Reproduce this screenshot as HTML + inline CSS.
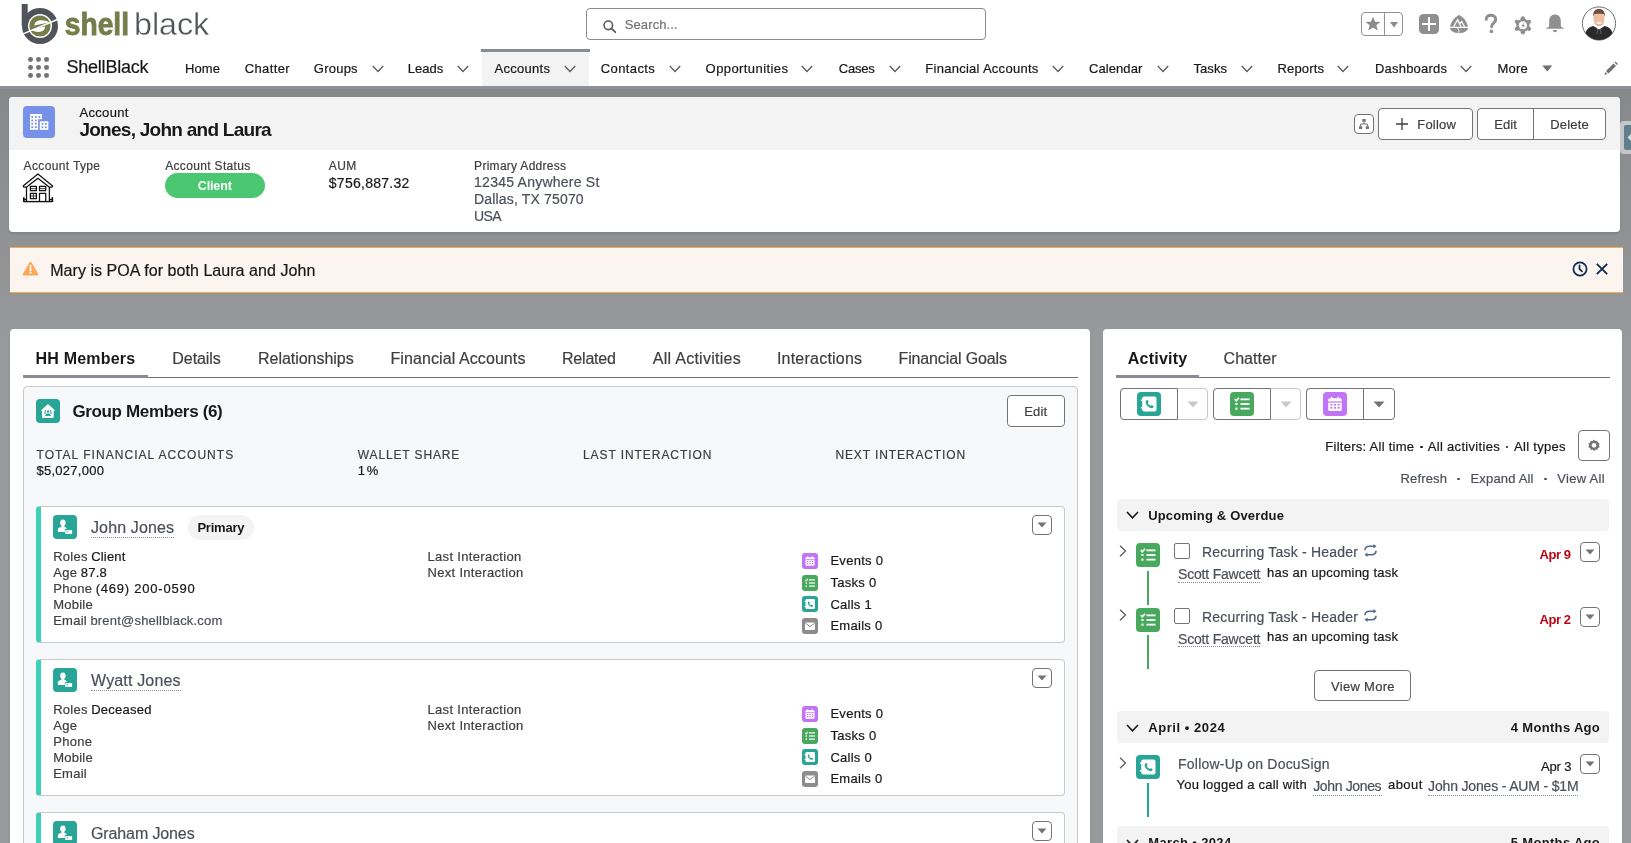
<!DOCTYPE html><html><head><meta charset="utf-8"><style>
*{margin:0;padding:0;box-sizing:border-box}
html,body{width:1631px;height:843px;overflow:hidden;background:#98999b;font-family:"Liberation Sans",sans-serif;position:relative}
.t{position:absolute;white-space:nowrap;-webkit-text-stroke:0.2px currentColor}
body{will-change:transform}
.r{position:absolute}
svg{position:absolute;overflow:visible}
.u{border-bottom:1px dotted #747474}
</style></head><body>
<div class="r" style="left:0px;top:0px;width:1631px;height:86px;background:#fff"></div>
<div class="r" style="left:0px;top:86px;width:1631px;height:3px;background:#8d9094"></div>
<div class="r" style="left:0px;top:89px;width:1631px;height:260px;background:linear-gradient(#87888a,#98999b)"></div>
<svg style="left:0;top:0" width="220" height="50" viewBox="0 0 220 50">
<circle cx="40" cy="26" r="18" fill="#50545a"/>
<rect x="21.7" y="4" width="6" height="22" fill="#50545a"/>
<circle cx="40" cy="26" r="12" fill="#fff"/>
<circle cx="40" cy="26" r="10.6" fill="#757d4b"/>
<path d="M34.3 25.6 C34.5 21.5 38 20.1 41.5 20.2 C45 20.3 47.5 21.2 49 22.4 C44 23.3 39 24.4 34.3 25.6 Z" fill="#fff"/><path d="M31.8 29.6 C36.5 28.4 41 27.4 45.2 26.6 C45 30 42.5 31.9 38.5 31.9 C35 31.9 32.8 31 31.8 29.6 Z" fill="#fff"/>
<line x1="22" y1="34.4" x2="58" y2="19.2" stroke="#fff" stroke-width="1.5"/>
<text x="64.8" y="35.2" font-family="Liberation Sans" font-weight="bold" font-size="32" fill="#757d4b" stroke="#757d4b" stroke-width="0.9" textLength="64.2" lengthAdjust="spacingAndGlyphs">shell</text>
<text x="134" y="35.2" font-family="Liberation Sans" font-size="32" fill="#50545a" stroke="#fff" stroke-width="0.35" textLength="75.2" lengthAdjust="spacingAndGlyphs">black</text>
</svg>
<div class="r" style="left:586px;top:8px;width:400px;height:32px;border:1px solid #8c8c8c;border-radius:4px;background:#fff"></div>
<svg style="left:603px;top:20px" width="14" height="13" viewBox="0 0 14 13"><circle cx="5.3" cy="5.3" r="4.3" fill="none" stroke="#5c5c5c" stroke-width="1.6"/><line x1="8.4" y1="8.4" x2="12.3" y2="12.2" stroke="#5c5c5c" stroke-width="1.8" stroke-linecap="round"/></svg>
<div class="t " style="left:624.70px;top:18.40px;font-size:13px;line-height:13px;color:#747474;letter-spacing:0.121px;">Search...</div>
<div class="r" style="left:1361px;top:12px;width:42px;height:24px;border:1px solid #939393;border-radius:4px;background:#fff"></div>
<div class="r" style="left:1384px;top:12px;width:1px;height:24px;background:#939393"></div>
<svg style="left:1365px;top:16px" width="16" height="16" viewBox="0 0 16 16"><path d="M8 0.8 L10.1 5.8 L15.4 6 L11.3 9.3 L12.8 14.6 L8 11.5 L3.2 14.6 L4.7 9.3 L0.6 6 L5.9 5.8 Z" fill="#8c8c8c"/></svg>
<svg style="left:1389px;top:21px" width="10" height="8" viewBox="0 0 10 8"><path d="M1 1 L9 1 L5 6.5 Z" fill="#8c8c8c"/></svg>
<div class="r" style="left:1419px;top:14px;width:20px;height:20px;background:#8f8f8f;border-radius:4.5px"></div>
<div class="r" style="left:1428px;top:17px;width:2.2px;height:14px;background:#fff"></div>
<div class="r" style="left:1422px;top:23px;width:14px;height:2.2px;background:#fff"></div>
<svg style="left:1446px;top:12px" width="26" height="24" viewBox="0 0 26 24"><path d="M13.1 3 C16.5 4.5 21.2 9 21.8 14.7 L4.2 14.7 C4.8 9 9.7 4.5 13.1 3Z" fill="#8f8f8f"/><path d="M4 16.1 L22 16.1 C21.6 19.3 17.5 21.3 13 21.3 C8.5 21.3 4.4 19.3 4 16.1Z" fill="#8f8f8f"/><path d="M11.6 15.9 L13 18.6 L12.7 21.6" fill="none" stroke="#fff" stroke-width="0.9"/><path d="M7.6 14.8 L11.6 7.7 L15 14.8 M13.6 11.7 L15.6 9.5 L18.6 14.8" fill="none" stroke="#fff" stroke-width="1.3" stroke-linejoin="miter"/></svg>
<svg style="left:1484px;top:14px" width="14" height="20" viewBox="0 0 14 20"><path d="M2.2 5.3 C2.2 2.8 4.2 1.3 6.8 1.3 C9.6 1.3 11.7 3 11.7 5.4 C11.7 8.5 7.8 9.2 7.6 12.7" fill="none" stroke="#8f8f8f" stroke-width="3" stroke-linecap="round"/><circle cx="7.4" cy="17.4" r="1.8" fill="#8f8f8f"/></svg>
<svg style="left:1514px;top:15.5px" width="18" height="19" viewBox="0 0 18 19"><g fill="#8f8f8f"><circle cx="8.9" cy="9.35" r="6.6"/><circle cx="8.90" cy="2.35" r="2.15"/><circle cx="14.96" cy="5.85" r="2.15"/><circle cx="14.96" cy="12.85" r="2.15"/><circle cx="8.90" cy="16.35" r="2.15"/><circle cx="2.84" cy="12.85" r="2.15"/><circle cx="2.84" cy="5.85" r="2.15"/></g><circle cx="8.9" cy="9.35" r="4.0" fill="#fff"/><path d="M10.3 6.6 L7.3 9.9 L9 9.9 L8 12.4 L10.9 9 L9.3 9 L10.6 6.6 Z" fill="#8f8f8f"/></svg>
<svg style="left:1545px;top:13.8px" width="20" height="19" viewBox="0 0 20 19"><path d="M10 0.5 C14 0.5 15.8 3.5 15.8 7 L15.8 11.5 C15.8 13 17.5 13.5 18.8 14.2 L18.8 14.8 L1.2 14.8 L1.2 14.2 C2.5 13.5 4.2 13 4.2 11.5 L4.2 7 C4.2 3.5 6 0.5 10 0.5 Z" fill="#8f8f8f"/><path d="M7.8 16 L12.2 16 C12 17.6 11 18.2 10 18.2 C9 18.2 8 17.6 7.8 16 Z" fill="#8f8f8f"/></svg>
<svg style="left:1581px;top:5.5px" width="36" height="35" viewBox="0 0 36 35"><defs><clipPath id="av"><circle cx="18" cy="17.5" r="16.5"/></clipPath></defs><circle cx="18" cy="17.5" r="16.6" fill="#fff" stroke="#6f6f6f" stroke-width="1"/><g clip-path="url(#av)"><ellipse cx="18" cy="12.8" rx="5.6" ry="7.2" fill="#efbfa3"/><path d="M12.2 11 C11.8 5.5 14 3 18 3 C22 3 24.2 5.5 23.8 11 L22.8 8.2 C20 7.6 16 7.6 13.2 8.2 Z" fill="#6e4e3a"/><path d="M14.2 16 C15 19.5 21 19.5 21.8 16 L21.5 18.5 C20 20.3 16 20.3 14.5 18.5Z" fill="#d9a58b"/><rect x="15.6" y="16.2" width="4.8" height="1.6" rx="0.8" fill="#fff"/><path d="M3 36 C3 25 7 21 12.5 20 L15.5 22 L18 23.5 L20.5 22 L23.5 20 C29 21 33 25 33 36Z" fill="#2b292a"/><path d="M16.5 23 L16 28 M19.5 23 L20 28" stroke="#bbb" stroke-width="0.4"/></g></svg>
<div class="r" style="left:28.3px;top:57.3px;width:4.8px;height:4.8px;border-radius:50%;background:#737373"></div>
<div class="r" style="left:36.3px;top:57.3px;width:4.8px;height:4.8px;border-radius:50%;background:#737373"></div>
<div class="r" style="left:44.3px;top:57.3px;width:4.8px;height:4.8px;border-radius:50%;background:#737373"></div>
<div class="r" style="left:28.3px;top:65.3px;width:4.8px;height:4.8px;border-radius:50%;background:#737373"></div>
<div class="r" style="left:36.3px;top:65.3px;width:4.8px;height:4.8px;border-radius:50%;background:#737373"></div>
<div class="r" style="left:44.3px;top:65.3px;width:4.8px;height:4.8px;border-radius:50%;background:#737373"></div>
<div class="r" style="left:28.3px;top:73.3px;width:4.8px;height:4.8px;border-radius:50%;background:#737373"></div>
<div class="r" style="left:36.3px;top:73.3px;width:4.8px;height:4.8px;border-radius:50%;background:#737373"></div>
<div class="r" style="left:44.3px;top:73.3px;width:4.8px;height:4.8px;border-radius:50%;background:#737373"></div>
<div class="t " style="left:66.50px;top:57.96px;font-size:18px;line-height:18px;color:#181818;letter-spacing:-0.227px;">ShellBlack</div>
<div class="r" style="left:482px;top:52px;width:107px;height:34px;background:#f3f3f3"></div>
<div class="r" style="left:481px;top:49px;width:109px;height:3px;background:#878c92"></div>
<div class="t " style="left:185.00px;top:62.10px;font-size:13px;line-height:13px;color:#181818;letter-spacing:0.104px;">Home</div>
<div class="t " style="left:244.70px;top:62.10px;font-size:13px;line-height:13px;color:#181818;letter-spacing:0.393px;">Chatter</div>
<div class="t " style="left:313.80px;top:62.10px;font-size:13px;line-height:13px;color:#181818;letter-spacing:0.232px;">Groups</div>
<svg style="left:371.6px;top:65px" width="12" height="8" viewBox="0 0 12 8"><path d="M0.8 1 L6 6.5 L11.2 1" fill="none" stroke="#5c5c5c" stroke-width="1.3"/></svg>
<div class="t " style="left:407.70px;top:62.10px;font-size:13px;line-height:13px;color:#181818;letter-spacing:0.041px;">Leads</div>
<svg style="left:457px;top:65px" width="12" height="8" viewBox="0 0 12 8"><path d="M0.8 1 L6 6.5 L11.2 1" fill="none" stroke="#5c5c5c" stroke-width="1.3"/></svg>
<div class="t " style="left:494.50px;top:62.10px;font-size:13px;line-height:13px;color:#181818;letter-spacing:0.288px;">Accounts</div>
<svg style="left:564px;top:65px" width="12" height="8" viewBox="0 0 12 8"><path d="M0.8 1 L6 6.5 L11.2 1" fill="none" stroke="#5c5c5c" stroke-width="1.3"/></svg>
<div class="t " style="left:600.80px;top:62.10px;font-size:13px;line-height:13px;color:#181818;letter-spacing:0.384px;">Contacts</div>
<svg style="left:668.5px;top:65px" width="12" height="8" viewBox="0 0 12 8"><path d="M0.8 1 L6 6.5 L11.2 1" fill="none" stroke="#5c5c5c" stroke-width="1.3"/></svg>
<div class="t " style="left:705.60px;top:62.10px;font-size:13px;line-height:13px;color:#181818;letter-spacing:0.421px;">Opportunities</div>
<svg style="left:801px;top:65px" width="12" height="8" viewBox="0 0 12 8"><path d="M0.8 1 L6 6.5 L11.2 1" fill="none" stroke="#5c5c5c" stroke-width="1.3"/></svg>
<div class="t " style="left:838.80px;top:62.10px;font-size:13px;line-height:13px;color:#181818;letter-spacing:-0.215px;">Cases</div>
<svg style="left:888.5px;top:65px" width="12" height="8" viewBox="0 0 12 8"><path d="M0.8 1 L6 6.5 L11.2 1" fill="none" stroke="#5c5c5c" stroke-width="1.3"/></svg>
<div class="t " style="left:925.30px;top:62.10px;font-size:13px;line-height:13px;color:#181818;letter-spacing:0.269px;">Financial Accounts</div>
<svg style="left:1052px;top:65px" width="12" height="8" viewBox="0 0 12 8"><path d="M0.8 1 L6 6.5 L11.2 1" fill="none" stroke="#5c5c5c" stroke-width="1.3"/></svg>
<div class="t " style="left:1089.00px;top:62.10px;font-size:13px;line-height:13px;color:#181818;letter-spacing:0.074px;">Calendar</div>
<svg style="left:1157px;top:65px" width="12" height="8" viewBox="0 0 12 8"><path d="M0.8 1 L6 6.5 L11.2 1" fill="none" stroke="#5c5c5c" stroke-width="1.3"/></svg>
<div class="t " style="left:1193.50px;top:62.10px;font-size:13px;line-height:13px;color:#181818;letter-spacing:0.066px;">Tasks</div>
<svg style="left:1240.7px;top:65px" width="12" height="8" viewBox="0 0 12 8"><path d="M0.8 1 L6 6.5 L11.2 1" fill="none" stroke="#5c5c5c" stroke-width="1.3"/></svg>
<div class="t " style="left:1277.50px;top:62.10px;font-size:13px;line-height:13px;color:#181818;letter-spacing:0.161px;">Reports</div>
<svg style="left:1337px;top:65px" width="12" height="8" viewBox="0 0 12 8"><path d="M0.8 1 L6 6.5 L11.2 1" fill="none" stroke="#5c5c5c" stroke-width="1.3"/></svg>
<div class="t " style="left:1375.00px;top:62.10px;font-size:13px;line-height:13px;color:#181818;letter-spacing:0.208px;">Dashboards</div>
<svg style="left:1460px;top:65px" width="12" height="8" viewBox="0 0 12 8"><path d="M0.8 1 L6 6.5 L11.2 1" fill="none" stroke="#5c5c5c" stroke-width="1.3"/></svg>
<div class="t " style="left:1497.40px;top:62.10px;font-size:13px;line-height:13px;color:#181818;letter-spacing:0.225px;">More</div>
<svg style="left:1541.8px;top:64.5px" width="12" height="8" viewBox="0 0 12 8"><path d="M0.3 0.5 L10.3 0.5 L5.3 6.5 Z" fill="#6f6f6f"/></svg>
<svg style="left:1603px;top:61px" width="16" height="15" viewBox="0 0 16 15"><path d="M3 10 L10.5 2.5 L13 5 L5.5 12.5 Z" fill="#707070"/><path d="M2.5 11 L4.5 13 L1.5 14 Z" fill="#707070"/><path d="M11.5 1.5 L12.5 0.5 L15 3 L14 4 Z" fill="#707070"/></svg>
<div class="r" style="left:9px;top:97px;width:1610.5px;height:135px;background:#fff;border-radius:4px;box-shadow:0 2px 2px rgba(0,0,0,.1)"></div>
<div class="r" style="left:9px;top:97px;width:1610.5px;height:53px;background:#f3f3f3;border-radius:4px 4px 0 0"></div>
<div class="r" style="left:23px;top:106px;width:32px;height:32px;background:#7891e8;border-radius:4px"></div>
<svg style="left:23px;top:106px" width="32" height="32" viewBox="0 0 32 32"><path d="M7 8 H18.9 V13.2 H15.1 V23.85 H7 Z" fill="#fff"/><rect x="16.8" y="15.3" width="8.55" height="8.55" fill="#fff"/><g fill="#7891e8"><rect x="8.299999999999999" y="10.1" width="1.8" height="1.8"/><rect x="8.299999999999999" y="13.6" width="1.8" height="1.8"/><rect x="8.299999999999999" y="16.8" width="1.8" height="1.8"/><rect x="8.299999999999999" y="20.200000000000003" width="1.8" height="1.8"/><rect x="11.9" y="10.1" width="1.8" height="1.8"/><rect x="11.9" y="13.6" width="1.8" height="1.8"/><rect x="11.9" y="16.8" width="1.8" height="1.8"/><rect x="11.9" y="20.200000000000003" width="1.8" height="1.8"/><rect x="15.5" y="10.1" width="1.8" height="1.8"/><rect x="18.6" y="17.0" width="1.8" height="1.8"/><rect x="18.6" y="20.400000000000002" width="1.8" height="1.8"/><rect x="21.900000000000002" y="17.0" width="1.8" height="1.8"/><rect x="21.900000000000002" y="20.400000000000002" width="1.8" height="1.8"/></g></svg>
<div class="t " style="left:79.40px;top:106.20px;font-size:13px;line-height:13px;color:#181818;letter-spacing:0.336px;">Account</div>
<div class="t " style="left:79.40px;top:119.92px;font-size:19px;line-height:19px;color:#181818;font-weight:bold;-webkit-text-stroke:0;letter-spacing:-0.732px;">Jones, John and Laura</div>
<div class="r" style="left:1354px;top:114px;width:20px;height:20px;border:1px solid #747474;border-radius:4px;background:#fff"></div>
<svg style="left:1358px;top:118px" width="12" height="12" viewBox="0 0 12 12"><g fill="#747474"><rect x="4.3" y="1" width="3.4" height="2.8"/><rect x="1" y="8.2" width="3.2" height="2.8"/><rect x="7.8" y="8.2" width="3.2" height="2.8"/></g><path d="M6 3.8 V6 M2.6 8.2 V6 H9.4 V8.2" fill="none" stroke="#747474" stroke-width="1"/></svg>
<div class="r" style="left:1378px;top:108px;width:94.5px;height:31.5px;border:1px solid #747474;border-radius:4px;background:#fff"></div>
<svg style="left:1396px;top:117.5px" width="12" height="12" viewBox="0 0 12 12"><path d="M6 0 V12 M0 6 H12" stroke="#3e3e3e" stroke-width="1.3"/></svg>
<div class="t " style="left:1417.30px;top:117.60px;font-size:13px;line-height:13px;color:#3e3e3e;letter-spacing:0.184px;">Follow</div>
<div class="r" style="left:1477px;top:108px;width:129px;height:31.5px;border:1px solid #747474;border-radius:4px;background:#fff"></div>
<div class="r" style="left:1533px;top:108px;width:1px;height:31.5px;background:#747474"></div>
<div class="t " style="left:1494.20px;top:117.60px;font-size:13px;line-height:13px;color:#3e3e3e;letter-spacing:0.065px;">Edit</div>
<div class="t " style="left:1550.30px;top:117.60px;font-size:13px;line-height:13px;color:#3e3e3e;letter-spacing:0.181px;">Delete</div>
<div class="r" style="left:1620px;top:121px;width:14px;height:33px;background:#c5c6c8;border-radius:4px 0 0 4px"></div>
<div class="r" style="left:1624px;top:125px;width:10px;height:25px;background:#5f7f8b;border-radius:2px 0 0 2px"></div>
<svg style="left:1627px;top:133px" width="5" height="9" viewBox="0 0 5 9"><path d="M4.5 0.5 L0.5 4.5 L4.5 8.5 Z" fill="#d8dde0"/></svg>
<div class="t " style="left:23.60px;top:159.74px;font-size:12px;line-height:12px;color:#3e3e3e;letter-spacing:0.357px;">Account Type</div>
<div class="t " style="left:165.20px;top:159.74px;font-size:12px;line-height:12px;color:#3e3e3e;letter-spacing:0.333px;">Account Status</div>
<div class="t " style="left:328.80px;top:159.54px;font-size:12px;line-height:12px;color:#3e3e3e;letter-spacing:0.414px;">AUM</div>
<div class="t " style="left:474.10px;top:159.54px;font-size:12px;line-height:12px;color:#3e3e3e;letter-spacing:0.283px;">Primary Address</div>
<svg style="left:20px;top:171px" width="36" height="34" viewBox="0 0 36 34"><g fill="none" stroke="#111" stroke-width="1.25" stroke-linejoin="round">
<path d="M6.3 16.2 H4.2 C3.2 16.2 2.9 15.2 3.7 14.5 L17.9 3 L32.1 14.5 C32.9 15.2 32.6 16.2 31.6 16.2 H29.5"/>
<path d="M6.3 16.2 L17.9 7.3 L29.5 16.2"/>
<path d="M6.5 16 V30.4 M29.4 16 V30.4"/>
<rect x="10.4" y="15.4" width="6" height="4.3"/><rect x="19.5" y="15.4" width="6.2" height="4.3"/>
<path d="M10.4 17.6 H16.4 M19.5 17.6 H25.7" stroke-width="0.8"/>
<rect x="10.4" y="22.4" width="6" height="5.2"/><path d="M13.4 22.4 V27.6 M10.4 25 H16.4" stroke-width="0.8"/>
<path d="M19.5 30.4 V22.4 H25.7 V30.4"/>
<path d="M3.8 30.6 H32.4" stroke-width="1.4"/>
</g><path d="M3.8 26.3 V31 M32.4 26.3 V31" stroke="#111" stroke-width="1.6"/><path d="M4 28.5 H6.5 M29.4 28.5 H32" stroke="#111" stroke-width="1.6"/></svg>
<div class="r" style="left:165px;top:173px;width:100px;height:25px;background:#4bc771;border-radius:13px"></div>
<div class="t " style="left:197.80px;top:180.12px;font-size:12.5px;line-height:12.5px;color:#fff;font-weight:bold;-webkit-text-stroke:0;letter-spacing:-0.144px;">Client</div>
<div class="t " style="left:328.80px;top:175.85px;font-size:14px;line-height:14px;color:#181818;letter-spacing:0.259px;">$756,887.32</div>
<div class="t " style="left:474.10px;top:174.95px;font-size:14px;line-height:14px;color:#4b5058;letter-spacing:0.238px;">12345 Anywhere St</div>
<div class="t " style="left:474.10px;top:191.85px;font-size:14px;line-height:14px;color:#4b5058;letter-spacing:0.159px;">Dallas, TX 75070</div>
<div class="t " style="left:474.10px;top:208.55px;font-size:14px;line-height:14px;color:#4b5058;letter-spacing:-0.598px;">USA</div>
<div class="r" style="left:10px;top:247px;width:1613px;height:46px;background:#fcf4ee;border-top:1px solid #f7a94f;border-bottom:1px solid #f7a94f"></div>
<svg style="left:21.5px;top:261px" width="17" height="15" viewBox="0 0 17 15"><path d="M8.5 0.8 C9 0.8 9.3 1 9.6 1.5 L16.2 13 C16.6 13.8 16.2 14.4 15.4 14.4 L1.6 14.4 C0.8 14.4 0.4 13.8 0.8 13 L7.4 1.5 C7.7 1 8 0.8 8.5 0.8Z" fill="#f9a95a"/><path d="M8.5 4.6 V9.6" stroke="#fff" stroke-width="1.7" stroke-linecap="round"/><circle cx="8.5" cy="11.8" r="1" fill="#fff"/></svg>
<div class="t " style="left:50.20px;top:262.66px;font-size:16px;line-height:16px;color:#181818;letter-spacing:0.054px;">Mary is POA for both Laura and John</div>
<svg style="left:1572px;top:261px" width="16" height="16" viewBox="0 0 16 16"><circle cx="8" cy="8" r="6.6" fill="none" stroke="#0b2a55" stroke-width="1.7"/><path d="M7.5 4.3 V8.2 L10 10.4" fill="none" stroke="#0b2a55" stroke-width="1.7" stroke-linecap="round"/></svg>
<svg style="left:1596px;top:263px" width="12" height="12" viewBox="0 0 12 12"><path d="M0.8 0.8 L11.2 11.2 M11.2 0.8 L0.8 11.2" stroke="#0b2a55" stroke-width="1.8"/></svg>
<div class="r" style="left:10px;top:329px;width:1080px;height:600px;background:#fff;border-radius:4px;box-shadow:0 2px 2px rgba(0,0,0,.1)"></div>
<div class="r" style="left:1103px;top:329px;width:519px;height:600px;background:#fff;border-radius:4px"></div>
<div class="t " style="left:35.50px;top:350.66px;font-size:16px;line-height:16px;color:#181818;font-weight:bold;-webkit-text-stroke:0;letter-spacing:0.203px;">HH Members</div>
<div class="t " style="left:172.30px;top:350.66px;font-size:16px;line-height:16px;color:#3e3e3e;letter-spacing:-0.059px;">Details</div>
<div class="t " style="left:258.00px;top:350.66px;font-size:16px;line-height:16px;color:#3e3e3e;letter-spacing:-0.028px;">Relationships</div>
<div class="t " style="left:390.50px;top:350.66px;font-size:16px;line-height:16px;color:#3e3e3e;letter-spacing:0.087px;">Financial Accounts</div>
<div class="t " style="left:562.00px;top:350.66px;font-size:16px;line-height:16px;color:#3e3e3e;letter-spacing:-0.201px;">Related</div>
<div class="t " style="left:652.80px;top:350.66px;font-size:16px;line-height:16px;color:#3e3e3e;letter-spacing:0.266px;">All Activities</div>
<div class="t " style="left:776.90px;top:350.66px;font-size:16px;line-height:16px;color:#3e3e3e;letter-spacing:0.229px;">Interactions</div>
<div class="t " style="left:898.50px;top:350.66px;font-size:16px;line-height:16px;color:#3e3e3e;letter-spacing:-0.134px;">Financial Goals</div>
<div class="r" style="left:23px;top:377px;width:1055px;height:1px;background:#707070"></div>
<div class="r" style="left:23px;top:375px;width:125px;height:3px;background:#898d92"></div>
<div class="r" style="left:23px;top:386px;width:1055px;height:600px;background:#f7f8fa;border:1px solid #c9c9c9;border-radius:4px"></div>
<div class="r" style="left:36px;top:399px;width:24px;height:24px;background:#28a597;border-radius:4px"></div>
<svg style="left:36px;top:399px" width="24" height="24" viewBox="0 0 24 24"><path d="M12 5 L19.3 11.7 L17.7 11.7 L17.7 18.3 Q17.7 19.1 16.9 19.1 L6.8 19.1 Q6 19.1 6 18.3 L6 11.7 L4.7 11.7 Z" fill="#fff"/><g fill="#28a597"><ellipse cx="12" cy="12.6" rx="1.1" ry="1.4"/><path d="M9.2 17.1 C9.5 15 10.5 14.6 12 14.6 C13.5 14.6 14.5 15 14.8 17.1 Z"/><path d="M9.6 11.1 C8.6 11.1 8.6 13.5 8.3 15.2 C8.8 14.7 9.5 14.5 10 14.5 L9.5 13.3 C10 12.5 10.3 11.1 9.6 11.1Z"/><path d="M14.4 11.1 C15.4 11.1 15.4 13.5 15.7 15.2 C15.2 14.7 14.5 14.5 14 14.5 L14.5 13.3 C14 12.5 13.7 11.1 14.4 11.1Z"/></g></svg>
<div class="t " style="left:72.40px;top:402.91px;font-size:17px;line-height:17px;color:#181818;font-weight:bold;-webkit-text-stroke:0;letter-spacing:-0.346px;">Group Members (6)</div>
<div class="r" style="left:1007px;top:395px;width:58px;height:32px;border:1px solid #747474;border-radius:4px;background:#fff"></div>
<div class="t " style="left:1024.20px;top:405.00px;font-size:13px;line-height:13px;color:#3e3e3e;letter-spacing:0.198px;">Edit</div>
<div class="t " style="left:36.50px;top:449.04px;font-size:12px;line-height:12px;color:#3e3e3e;letter-spacing:1.044px;">TOTAL FINANCIAL ACCOUNTS</div>
<div class="t " style="left:357.80px;top:449.04px;font-size:12px;line-height:12px;color:#3e3e3e;letter-spacing:0.862px;">WALLET SHARE</div>
<div class="t " style="left:582.90px;top:449.04px;font-size:12px;line-height:12px;color:#3e3e3e;letter-spacing:0.938px;">LAST INTERACTION</div>
<div class="t " style="left:835.40px;top:449.04px;font-size:12px;line-height:12px;color:#3e3e3e;letter-spacing:0.891px;">NEXT INTERACTION</div>
<div class="t " style="left:36.50px;top:463.80px;font-size:13px;line-height:13px;color:#181818;letter-spacing:0.256px;">$5,027,000</div>
<div class="t " style="left:357.80px;top:463.80px;font-size:13px;line-height:13px;color:#181818;letter-spacing:-0.953px;">1 %</div>
<div class="r" style="left:36px;top:506px;width:1029px;height:137px;background:#fff;border:1px solid #c9c9c9;border-left:5px solid #3ccfb9;border-radius:4px"></div>
<div class="r" style="left:53px;top:515px;width:24px;height:24px;background:#28a597;border-radius:4px"></div>
<svg style="left:53px;top:515px" width="24" height="24" viewBox="0 0 24 24"><ellipse cx="9.9" cy="7.7" rx="2.7" ry="3.2" fill="#fff"/><path d="M8.6 10.5 L11.2 10.5 L11.4 11.8 C12.6 12.2 13.4 12.8 13.8 14 L11.8 14 L11.8 16.9 L4.8 16.9 L4.8 14.8 C4.8 13.2 6.5 12.3 8.4 11.8 Z" fill="#fff"/><rect x="12.2" y="15.1" width="6.9" height="3.8" fill="#fff"/><path d="M13.3 16.2 L15.3 16.2 L14.3 17.6 Z" fill="#28a597"/></svg>
<div class="t " style="left:91.00px;top:519.96px;font-size:16px;line-height:16px;color:#4b5058;letter-spacing:0.123px;">John Jones</div>
<div class="r" style="left:91px;top:537px;width:83px;height:1px;border-bottom:1px dotted #8c8c8c"></div>
<div class="r" style="left:188.2px;top:514.8px;width:65.8px;height:25.3px;background:#f3f3f3;border-radius:13px"></div>
<div class="t " style="left:197.40px;top:520.90px;font-size:13px;line-height:13px;color:#181818;font-weight:bold;-webkit-text-stroke:0;letter-spacing:-0.223px;">Primary</div>
<div class="t " style="left:53.20px;top:550.00px;font-size:13px;line-height:13px;color:#3e3e3e;letter-spacing:0.249px;">Roles</div>
<div class="t " style="left:91.17px;top:550.00px;font-size:13px;line-height:13px;color:#181818;letter-spacing:0.200px;">Client</div>
<div class="t " style="left:53.20px;top:566.00px;font-size:13px;line-height:13px;color:#3e3e3e;letter-spacing:0.347px;">Age</div>
<div class="t " style="left:80.75px;top:566.00px;font-size:13px;line-height:13px;color:#181818;letter-spacing:0.253px;">87.8</div>
<div class="t " style="left:53.20px;top:582.00px;font-size:13px;line-height:13px;color:#3e3e3e;letter-spacing:0.282px;">Phone</div>
<div class="t " style="left:95.66px;top:582.00px;font-size:13px;line-height:13px;color:#181818;letter-spacing:0.774px;">(469) 200-0590</div>
<div class="t " style="left:53.20px;top:598.00px;font-size:13px;line-height:13px;color:#3e3e3e;letter-spacing:0.230px;">Mobile</div>
<div class="t " style="left:53.20px;top:614.00px;font-size:13px;line-height:13px;color:#3e3e3e;letter-spacing:0.244px;">Email</div>
<div class="t " style="left:90.41px;top:614.00px;font-size:13px;line-height:13px;color:#4b5058;letter-spacing:0.202px;">brent@shellblack.com</div>
<div class="t " style="left:427.50px;top:550.00px;font-size:13px;line-height:13px;color:#3e3e3e;letter-spacing:0.320px;">Last Interaction</div>
<div class="t " style="left:427.50px;top:566.00px;font-size:13px;line-height:13px;color:#3e3e3e;letter-spacing:0.309px;">Next Interaction</div>
<div class="r" style="left:1032px;top:515px;width:20px;height:20px;border:1px solid #747474;border-radius:4px;background:#fff"></div>
<svg style="left:1037px;top:522px" width="10" height="6" viewBox="0 0 10 6"><path d="M0.5 0.5 L9.5 0.5 L5 5.5Z" fill="#747474"/></svg>
<div class="r" style="left:802px;top:553.0px;width:16px;height:16px;background:#c274f6;border-radius:3px"></div>
<svg style="left:802px;top:553.0px" width="16" height="16" viewBox="0 0 16 16"><rect x="3.5" y="4.2" width="9" height="8.5" rx="1" fill="#fff"/><rect x="3.5" y="6.3" width="9" height="0.8" fill="#c274f6"/><g fill="#c274f6"><rect x="5" y="8" width="1.3" height="1.1"/><rect x="7.4" y="8" width="1.3" height="1.1"/><rect x="9.8" y="8" width="1.3" height="1.1"/><rect x="5" y="10" width="1.3" height="1.1"/><rect x="7.4" y="10" width="1.3" height="1.1"/><rect x="9.8" y="10" width="1.3" height="1.1"/></g><rect x="5.3" y="3.2" width="1" height="2" fill="#fff"/><rect x="9.7" y="3.2" width="1" height="2" fill="#fff"/></svg>
<div class="t " style="left:830.40px;top:554.30px;font-size:13px;line-height:13px;color:#181818;letter-spacing:0.289px;">Events 0</div>
<div class="r" style="left:802px;top:574.7px;width:16px;height:16px;background:#48a95e;border-radius:3px"></div>
<svg style="left:802px;top:574.7px" width="16" height="16" viewBox="0 0 16 16"><path d="M3.2 4.8 L4.2 5.8 L6 3.8" fill="none" stroke="#fff" stroke-width="1.1"/><rect x="7" y="4.3" width="6" height="1.2" fill="#fff"/><rect x="7" y="7.4" width="6" height="1.2" fill="#fff"/><rect x="7" y="10.5" width="6" height="1.2" fill="#fff"/><rect x="3.6" y="7.3" width="1.4" height="1.4" fill="#fff"/><rect x="3.6" y="10.4" width="1.4" height="1.4" fill="#fff"/></svg>
<div class="t " style="left:830.40px;top:576.00px;font-size:13px;line-height:13px;color:#181818;letter-spacing:0.294px;">Tasks 0</div>
<div class="r" style="left:802px;top:596.4px;width:16px;height:16px;background:#28a597;border-radius:3px"></div>
<svg style="left:802px;top:596.4px" width="16" height="16" viewBox="0 0 16 16"><rect x="3.5" y="3" width="9.5" height="10" rx="1.3" fill="#fff"/><rect x="2.6" y="5" width="1.8" height="1" fill="#fff"/><rect x="2.6" y="10" width="1.8" height="1" fill="#fff"/><path d="M6.3 5.6 C6.8 5.2 7.3 5.4 7.5 6 L7.6 6.7 C7.7 7 7.4 7.2 7.2 7.4 C7.6 8.3 8.2 8.9 9 9.3 C9.2 9 9.5 8.8 9.8 8.9 L10.6 9.1 C11.1 9.3 11.2 9.8 10.9 10.2 C10.3 11 9.3 11 8.3 10.4 C7 9.6 6.1 8.4 5.8 7.2 C5.7 6.5 5.9 5.9 6.3 5.6Z" fill="#28a597"/></svg>
<div class="t " style="left:830.40px;top:597.70px;font-size:13px;line-height:13px;color:#181818;letter-spacing:0.265px;">Calls 1</div>
<div class="r" style="left:802px;top:618.1px;width:16px;height:16px;background:#8c8c8c;border-radius:3px"></div>
<svg style="left:802px;top:618.1px" width="16" height="16" viewBox="0 0 16 16"><rect x="3" y="4.5" width="10" height="7.5" rx="0.8" fill="#fff"/><path d="M3.3 5 L8 8.6 L12.7 5" fill="none" stroke="#8c8c8c" stroke-width="1"/></svg>
<div class="t " style="left:830.40px;top:619.40px;font-size:13px;line-height:13px;color:#181818;letter-spacing:0.285px;">Emails 0</div>
<div class="r" style="left:36px;top:659px;width:1029px;height:137px;background:#fff;border:1px solid #c9c9c9;border-left:5px solid #3ccfb9;border-radius:4px"></div>
<div class="r" style="left:53px;top:668px;width:24px;height:24px;background:#28a597;border-radius:4px"></div>
<svg style="left:53px;top:668px" width="24" height="24" viewBox="0 0 24 24"><ellipse cx="9.9" cy="7.7" rx="2.7" ry="3.2" fill="#fff"/><path d="M8.6 10.5 L11.2 10.5 L11.4 11.8 C12.6 12.2 13.4 12.8 13.8 14 L11.8 14 L11.8 16.9 L4.8 16.9 L4.8 14.8 C4.8 13.2 6.5 12.3 8.4 11.8 Z" fill="#fff"/><rect x="12.2" y="15.1" width="6.9" height="3.8" fill="#fff"/><path d="M13.3 16.2 L15.3 16.2 L14.3 17.6 Z" fill="#28a597"/></svg>
<div class="t " style="left:91.00px;top:672.96px;font-size:16px;line-height:16px;color:#4b5058;letter-spacing:0.165px;">Wyatt Jones</div>
<div class="r" style="left:91px;top:690px;width:89.6px;height:1px;border-bottom:1px dotted #8c8c8c"></div>
<div class="t " style="left:53.20px;top:703.00px;font-size:13px;line-height:13px;color:#3e3e3e;letter-spacing:0.249px;">Roles</div>
<div class="t " style="left:91.17px;top:703.00px;font-size:13px;line-height:13px;color:#181818;letter-spacing:0.251px;">Deceased</div>
<div class="t " style="left:53.20px;top:719.00px;font-size:13px;line-height:13px;color:#3e3e3e;letter-spacing:0.347px;">Age</div>
<div class="t " style="left:53.20px;top:735.00px;font-size:13px;line-height:13px;color:#3e3e3e;letter-spacing:0.282px;">Phone</div>
<div class="t " style="left:53.20px;top:751.00px;font-size:13px;line-height:13px;color:#3e3e3e;letter-spacing:0.230px;">Mobile</div>
<div class="t " style="left:53.20px;top:767.00px;font-size:13px;line-height:13px;color:#3e3e3e;letter-spacing:0.244px;">Email</div>
<div class="t " style="left:427.50px;top:703.00px;font-size:13px;line-height:13px;color:#3e3e3e;letter-spacing:0.320px;">Last Interaction</div>
<div class="t " style="left:427.50px;top:719.00px;font-size:13px;line-height:13px;color:#3e3e3e;letter-spacing:0.309px;">Next Interaction</div>
<div class="r" style="left:1032px;top:668px;width:20px;height:20px;border:1px solid #747474;border-radius:4px;background:#fff"></div>
<svg style="left:1037px;top:675px" width="10" height="6" viewBox="0 0 10 6"><path d="M0.5 0.5 L9.5 0.5 L5 5.5Z" fill="#747474"/></svg>
<div class="r" style="left:802px;top:706.0px;width:16px;height:16px;background:#c274f6;border-radius:3px"></div>
<svg style="left:802px;top:706.0px" width="16" height="16" viewBox="0 0 16 16"><rect x="3.5" y="4.2" width="9" height="8.5" rx="1" fill="#fff"/><rect x="3.5" y="6.3" width="9" height="0.8" fill="#c274f6"/><g fill="#c274f6"><rect x="5" y="8" width="1.3" height="1.1"/><rect x="7.4" y="8" width="1.3" height="1.1"/><rect x="9.8" y="8" width="1.3" height="1.1"/><rect x="5" y="10" width="1.3" height="1.1"/><rect x="7.4" y="10" width="1.3" height="1.1"/><rect x="9.8" y="10" width="1.3" height="1.1"/></g><rect x="5.3" y="3.2" width="1" height="2" fill="#fff"/><rect x="9.7" y="3.2" width="1" height="2" fill="#fff"/></svg>
<div class="t " style="left:830.40px;top:707.30px;font-size:13px;line-height:13px;color:#181818;letter-spacing:0.289px;">Events 0</div>
<div class="r" style="left:802px;top:727.7px;width:16px;height:16px;background:#48a95e;border-radius:3px"></div>
<svg style="left:802px;top:727.7px" width="16" height="16" viewBox="0 0 16 16"><path d="M3.2 4.8 L4.2 5.8 L6 3.8" fill="none" stroke="#fff" stroke-width="1.1"/><rect x="7" y="4.3" width="6" height="1.2" fill="#fff"/><rect x="7" y="7.4" width="6" height="1.2" fill="#fff"/><rect x="7" y="10.5" width="6" height="1.2" fill="#fff"/><rect x="3.6" y="7.3" width="1.4" height="1.4" fill="#fff"/><rect x="3.6" y="10.4" width="1.4" height="1.4" fill="#fff"/></svg>
<div class="t " style="left:830.40px;top:729.00px;font-size:13px;line-height:13px;color:#181818;letter-spacing:0.294px;">Tasks 0</div>
<div class="r" style="left:802px;top:749.4px;width:16px;height:16px;background:#28a597;border-radius:3px"></div>
<svg style="left:802px;top:749.4px" width="16" height="16" viewBox="0 0 16 16"><rect x="3.5" y="3" width="9.5" height="10" rx="1.3" fill="#fff"/><rect x="2.6" y="5" width="1.8" height="1" fill="#fff"/><rect x="2.6" y="10" width="1.8" height="1" fill="#fff"/><path d="M6.3 5.6 C6.8 5.2 7.3 5.4 7.5 6 L7.6 6.7 C7.7 7 7.4 7.2 7.2 7.4 C7.6 8.3 8.2 8.9 9 9.3 C9.2 9 9.5 8.8 9.8 8.9 L10.6 9.1 C11.1 9.3 11.2 9.8 10.9 10.2 C10.3 11 9.3 11 8.3 10.4 C7 9.6 6.1 8.4 5.8 7.2 C5.7 6.5 5.9 5.9 6.3 5.6Z" fill="#28a597"/></svg>
<div class="t " style="left:830.40px;top:750.70px;font-size:13px;line-height:13px;color:#181818;letter-spacing:0.265px;">Calls 0</div>
<div class="r" style="left:802px;top:771.1px;width:16px;height:16px;background:#8c8c8c;border-radius:3px"></div>
<svg style="left:802px;top:771.1px" width="16" height="16" viewBox="0 0 16 16"><rect x="3" y="4.5" width="10" height="7.5" rx="0.8" fill="#fff"/><path d="M3.3 5 L8 8.6 L12.7 5" fill="none" stroke="#8c8c8c" stroke-width="1"/></svg>
<div class="t " style="left:830.40px;top:772.40px;font-size:13px;line-height:13px;color:#181818;letter-spacing:0.285px;">Emails 0</div>
<div class="r" style="left:36px;top:812px;width:1029px;height:137px;background:#fff;border:1px solid #c9c9c9;border-left:5px solid #3ccfb9;border-radius:4px"></div>
<div class="r" style="left:53px;top:821px;width:24px;height:24px;background:#28a597;border-radius:4px"></div>
<svg style="left:53px;top:821px" width="24" height="24" viewBox="0 0 24 24"><ellipse cx="9.9" cy="7.7" rx="2.7" ry="3.2" fill="#fff"/><path d="M8.6 10.5 L11.2 10.5 L11.4 11.8 C12.6 12.2 13.4 12.8 13.8 14 L11.8 14 L11.8 16.9 L4.8 16.9 L4.8 14.8 C4.8 13.2 6.5 12.3 8.4 11.8 Z" fill="#fff"/><rect x="12.2" y="15.1" width="6.9" height="3.8" fill="#fff"/><path d="M13.3 16.2 L15.3 16.2 L14.3 17.6 Z" fill="#28a597"/></svg>
<div class="t " style="left:91.00px;top:825.96px;font-size:16px;line-height:16px;color:#4b5058;letter-spacing:-0.118px;">Graham Jones</div>
<div class="r" style="left:91px;top:843px;width:103.7px;height:1px;border-bottom:1px dotted #8c8c8c"></div>
<div class="t " style="left:53.20px;top:856.00px;font-size:13px;line-height:13px;color:#3e3e3e;letter-spacing:0.249px;">Roles</div>
<div class="t " style="left:53.20px;top:872.00px;font-size:13px;line-height:13px;color:#3e3e3e;letter-spacing:0.347px;">Age</div>
<div class="t " style="left:53.20px;top:888.00px;font-size:13px;line-height:13px;color:#3e3e3e;letter-spacing:0.282px;">Phone</div>
<div class="t " style="left:53.20px;top:904.00px;font-size:13px;line-height:13px;color:#3e3e3e;letter-spacing:0.230px;">Mobile</div>
<div class="t " style="left:53.20px;top:920.00px;font-size:13px;line-height:13px;color:#3e3e3e;letter-spacing:0.244px;">Email</div>
<div class="t " style="left:427.50px;top:856.00px;font-size:13px;line-height:13px;color:#3e3e3e;letter-spacing:0.320px;">Last Interaction</div>
<div class="t " style="left:427.50px;top:872.00px;font-size:13px;line-height:13px;color:#3e3e3e;letter-spacing:0.309px;">Next Interaction</div>
<div class="r" style="left:1032px;top:821px;width:20px;height:20px;border:1px solid #747474;border-radius:4px;background:#fff"></div>
<svg style="left:1037px;top:828px" width="10" height="6" viewBox="0 0 10 6"><path d="M0.5 0.5 L9.5 0.5 L5 5.5Z" fill="#747474"/></svg>
<div class="r" style="left:802px;top:859.0px;width:16px;height:16px;background:#c274f6;border-radius:3px"></div>
<svg style="left:802px;top:859.0px" width="16" height="16" viewBox="0 0 16 16"><rect x="3.5" y="4.2" width="9" height="8.5" rx="1" fill="#fff"/><rect x="3.5" y="6.3" width="9" height="0.8" fill="#c274f6"/><g fill="#c274f6"><rect x="5" y="8" width="1.3" height="1.1"/><rect x="7.4" y="8" width="1.3" height="1.1"/><rect x="9.8" y="8" width="1.3" height="1.1"/><rect x="5" y="10" width="1.3" height="1.1"/><rect x="7.4" y="10" width="1.3" height="1.1"/><rect x="9.8" y="10" width="1.3" height="1.1"/></g><rect x="5.3" y="3.2" width="1" height="2" fill="#fff"/><rect x="9.7" y="3.2" width="1" height="2" fill="#fff"/></svg>
<div class="t " style="left:830.40px;top:860.30px;font-size:13px;line-height:13px;color:#181818;letter-spacing:0.289px;">Events 0</div>
<div class="r" style="left:802px;top:880.7px;width:16px;height:16px;background:#48a95e;border-radius:3px"></div>
<svg style="left:802px;top:880.7px" width="16" height="16" viewBox="0 0 16 16"><path d="M3.2 4.8 L4.2 5.8 L6 3.8" fill="none" stroke="#fff" stroke-width="1.1"/><rect x="7" y="4.3" width="6" height="1.2" fill="#fff"/><rect x="7" y="7.4" width="6" height="1.2" fill="#fff"/><rect x="7" y="10.5" width="6" height="1.2" fill="#fff"/><rect x="3.6" y="7.3" width="1.4" height="1.4" fill="#fff"/><rect x="3.6" y="10.4" width="1.4" height="1.4" fill="#fff"/></svg>
<div class="t " style="left:830.40px;top:882.00px;font-size:13px;line-height:13px;color:#181818;letter-spacing:0.294px;">Tasks 0</div>
<div class="r" style="left:802px;top:902.4px;width:16px;height:16px;background:#28a597;border-radius:3px"></div>
<svg style="left:802px;top:902.4px" width="16" height="16" viewBox="0 0 16 16"><rect x="3.5" y="3" width="9.5" height="10" rx="1.3" fill="#fff"/><rect x="2.6" y="5" width="1.8" height="1" fill="#fff"/><rect x="2.6" y="10" width="1.8" height="1" fill="#fff"/><path d="M6.3 5.6 C6.8 5.2 7.3 5.4 7.5 6 L7.6 6.7 C7.7 7 7.4 7.2 7.2 7.4 C7.6 8.3 8.2 8.9 9 9.3 C9.2 9 9.5 8.8 9.8 8.9 L10.6 9.1 C11.1 9.3 11.2 9.8 10.9 10.2 C10.3 11 9.3 11 8.3 10.4 C7 9.6 6.1 8.4 5.8 7.2 C5.7 6.5 5.9 5.9 6.3 5.6Z" fill="#28a597"/></svg>
<div class="t " style="left:830.40px;top:903.70px;font-size:13px;line-height:13px;color:#181818;letter-spacing:0.265px;">Calls 0</div>
<div class="r" style="left:802px;top:924.1px;width:16px;height:16px;background:#8c8c8c;border-radius:3px"></div>
<svg style="left:802px;top:924.1px" width="16" height="16" viewBox="0 0 16 16"><rect x="3" y="4.5" width="10" height="7.5" rx="0.8" fill="#fff"/><path d="M3.3 5 L8 8.6 L12.7 5" fill="none" stroke="#8c8c8c" stroke-width="1"/></svg>
<div class="t " style="left:830.40px;top:925.40px;font-size:13px;line-height:13px;color:#181818;letter-spacing:0.285px;">Emails 0</div>
<div class="t " style="left:1127.80px;top:350.66px;font-size:16px;line-height:16px;color:#181818;font-weight:bold;-webkit-text-stroke:0;letter-spacing:0.237px;">Activity</div>
<div class="t " style="left:1223.50px;top:350.66px;font-size:16px;line-height:16px;color:#3e3e3e;letter-spacing:0.081px;">Chatter</div>
<div class="r" style="left:1116px;top:377px;width:493.5px;height:1px;background:#707070"></div>
<div class="r" style="left:1116px;top:375px;width:83px;height:3px;background:#898d92"></div>
<div class="r" style="left:1120.2px;top:388px;width:88.2px;height:32px;border:1px solid #c9c9c9;border-radius:4px;background:#fff"></div>
<div class="r" style="left:1120.2px;top:388px;width:57.5px;height:32px;border:1px solid #747474;border-radius:4px 0 0 4px;background:#fff"></div>
<div class="r" style="left:1136.8px;top:392px;width:24px;height:24px;background:#28a597;border-radius:4px"></div>
<svg style="left:1136.8px;top:392px" width="24" height="24" viewBox="0 0 16 16"><rect x="3.5" y="3" width="9.5" height="10" rx="1.3" fill="#fff"/><rect x="2.6" y="5" width="1.8" height="1" fill="#fff"/><rect x="2.6" y="10" width="1.8" height="1" fill="#fff"/><path d="M6.3 5.6 C6.8 5.2 7.3 5.4 7.5 6 L7.6 6.7 C7.7 7 7.4 7.2 7.2 7.4 C7.6 8.3 8.2 8.9 9 9.3 C9.2 9 9.5 8.8 9.8 8.9 L10.6 9.1 C11.1 9.3 11.2 9.8 10.9 10.2 C10.3 11 9.3 11 8.3 10.4 C7 9.6 6.1 8.4 5.8 7.2 C5.7 6.5 5.9 5.9 6.3 5.6Z" fill="#28a597"/></svg>
<svg style="left:1187.2px;top:401px" width="12" height="7" viewBox="0 0 12 7"><path d="M0.5 0.5 L11.5 0.5 L6 6.5Z" fill="#c9c9c9"/></svg>
<div class="r" style="left:1213.3px;top:388px;width:88.2px;height:32px;border:1px solid #c9c9c9;border-radius:4px;background:#fff"></div>
<div class="r" style="left:1213.3px;top:388px;width:57.5px;height:32px;border:1px solid #747474;border-radius:4px 0 0 4px;background:#fff"></div>
<div class="r" style="left:1229.8999999999999px;top:392px;width:24px;height:24px;background:#48a95e;border-radius:4px"></div>
<svg style="left:1229.8999999999999px;top:392px" width="24" height="24" viewBox="0 0 16 16"><path d="M3.2 4.8 L4.2 5.8 L6 3.8" fill="none" stroke="#fff" stroke-width="1.1"/><rect x="7" y="4.3" width="6" height="1.2" fill="#fff"/><rect x="7" y="7.4" width="6" height="1.2" fill="#fff"/><rect x="7" y="10.5" width="6" height="1.2" fill="#fff"/><rect x="3.6" y="7.3" width="1.4" height="1.4" fill="#fff"/><rect x="3.6" y="10.4" width="1.4" height="1.4" fill="#fff"/></svg>
<svg style="left:1280.3px;top:401px" width="12" height="7" viewBox="0 0 12 7"><path d="M0.5 0.5 L11.5 0.5 L6 6.5Z" fill="#c9c9c9"/></svg>
<div class="r" style="left:1306.4px;top:388px;width:88.2px;height:32px;border:1px solid #747474;border-radius:4px;background:#fff"></div>
<div class="r" style="left:1306.4px;top:388px;width:57.5px;height:32px;border:1px solid #747474;border-radius:4px 0 0 4px;background:#fff"></div>
<div class="r" style="left:1323.0px;top:392px;width:24px;height:24px;background:#c274f6;border-radius:4px"></div>
<svg style="left:1323.0px;top:392px" width="24" height="24" viewBox="0 0 16 16"><rect x="3.5" y="4.2" width="9" height="8.5" rx="1" fill="#fff"/><rect x="3.5" y="6.3" width="9" height="0.8" fill="#c274f6"/><g fill="#c274f6"><rect x="5" y="8" width="1.3" height="1.1"/><rect x="7.4" y="8" width="1.3" height="1.1"/><rect x="9.8" y="8" width="1.3" height="1.1"/><rect x="5" y="10" width="1.3" height="1.1"/><rect x="7.4" y="10" width="1.3" height="1.1"/><rect x="9.8" y="10" width="1.3" height="1.1"/></g><rect x="5.3" y="3.2" width="1" height="2" fill="#fff"/><rect x="9.7" y="3.2" width="1" height="2" fill="#fff"/></svg>
<svg style="left:1373.4px;top:401px" width="12" height="7" viewBox="0 0 12 7"><path d="M0.5 0.5 L11.5 0.5 L6 6.5Z" fill="#747474"/></svg>
<div class="t " style="left:1325.30px;top:440.40px;font-size:13px;line-height:13px;color:#181818;letter-spacing:0.268px;">Filters: All time</div>
<div class="t " style="left:1427.80px;top:440.40px;font-size:13px;line-height:13px;color:#181818;letter-spacing:0.306px;">All activities</div>
<div class="t " style="left:1514.00px;top:440.40px;font-size:13px;line-height:13px;color:#181818;letter-spacing:0.295px;">All types</div>
<div class="r" style="left:1420px;top:445.8px;width:2.6px;height:2.6px;background:#181818;border-radius:50%"></div>
<div class="r" style="left:1505.6px;top:445.8px;width:2.6px;height:2.6px;background:#181818;border-radius:50%"></div>
<div class="r" style="left:1578px;top:430.2px;width:31.5px;height:31px;border:1px solid #747474;border-radius:4px;background:#fff"></div>
<svg style="left:1586px;top:438px" width="16" height="16" viewBox="0 0 16 16"><path d="M8 1.5 L9.3 3 L11.3 2.7 L11.8 4.6 L13.7 5.4 L12.9 7.3 L13.7 9.2 L11.8 10 L11.3 11.9 L9.3 11.6 L8 13.2 L6.7 11.6 L4.7 11.9 L4.2 10 L2.3 9.2 L3.1 7.3 L2.3 5.4 L4.2 4.6 L4.7 2.7 L6.7 3 Z" fill="#747474"/><circle cx="8" cy="7.35" r="2.3" fill="#fff"/></svg>
<div class="t " style="left:1400.50px;top:472.30px;font-size:13px;line-height:13px;color:#4b5058;letter-spacing:0.161px;">Refresh</div>
<div class="r" style="left:1457.4px;top:477.7px;width:2.6px;height:2.6px;background:#4b5058;border-radius:50%"></div>
<div class="t " style="left:1470.50px;top:472.30px;font-size:13px;line-height:13px;color:#4b5058;letter-spacing:0.172px;">Expand All</div>
<div class="r" style="left:1544px;top:477.7px;width:2.6px;height:2.6px;background:#4b5058;border-radius:50%"></div>
<div class="t " style="left:1557.30px;top:472.30px;font-size:13px;line-height:13px;color:#4b5058;letter-spacing:0.286px;">View All</div>
<div class="r" style="left:1117px;top:498.6px;width:491.8px;height:32.2px;background:#f3f3f3;border-radius:4px"></div>
<svg style="left:1126.3px;top:511.20000000000005px" width="13" height="9" viewBox="0 0 13 9"><path d="M1 1 L6.5 6.8 L12 1" fill="none" stroke="#181818" stroke-width="1.6"/></svg>
<div class="t " style="left:1148.20px;top:508.70px;font-size:13px;line-height:13px;color:#181818;font-weight:bold;-webkit-text-stroke:0;letter-spacing:0.164px;">Upcoming &amp; Overdue</div>
<svg style="left:1118.5px;top:544.7px" width="8" height="12" viewBox="0 0 8 12"><path d="M1 0.8 L6.5 6 L1 11.2" fill="none" stroke="#5c5c5c" stroke-width="1.3"/></svg>
<div class="r" style="left:1136px;top:543.2px;width:24px;height:24px;background:#48a95e;border-radius:4px"></div>
<svg style="left:1136px;top:543.2px" width="24" height="24" viewBox="0 0 16 16"><path d="M3.2 4.8 L4.2 5.8 L6 3.8" fill="none" stroke="#fff" stroke-width="1.1"/><rect x="7" y="4.3" width="6" height="1.2" fill="#fff"/><rect x="7" y="7.4" width="6" height="1.2" fill="#fff"/><rect x="7" y="10.5" width="6" height="1.2" fill="#fff"/><rect x="3.6" y="7.3" width="1.4" height="1.4" fill="#fff"/><rect x="3.6" y="10.4" width="1.4" height="1.4" fill="#fff"/></svg>
<div class="r" style="left:1147px;top:570.7px;width:2px;height:34px;background:#48a95e"></div>
<div class="r" style="left:1174.2px;top:543.2px;width:16px;height:16px;border:1px solid #747474;border-radius:2px;background:#fff"></div>
<div class="t " style="left:1201.90px;top:545.35px;font-size:14px;line-height:14px;color:#4b5058;letter-spacing:0.209px;">Recurring Task - Header</div>
<svg style="left:1362.5px;top:544.2px" width="15" height="13" viewBox="0 0 15 13"><g fill="none" stroke="#4f6a92" stroke-width="1.6"><path d="M2 6.2 C2 3.5 4 2.3 6.5 2.3 L11.5 2.3"/><path d="M13 6.8 C13 9.5 11 10.7 8.5 10.7 L3.5 10.7"/></g><path d="M10.5 0 L13.5 2.3 L10.5 4.6Z M4.5 8.4 L1.5 10.7 L4.5 13Z" fill="#4f6a92"/></svg>
<div class="t " style="left:1539.50px;top:547.80px;font-size:13px;line-height:13px;color:#ba0517;font-weight:bold;-webkit-text-stroke:0;letter-spacing:-0.434px;">Apr 9</div>
<div class="r" style="left:1580px;top:541.9000000000001px;width:20px;height:20px;border:1px solid #747474;border-radius:4px;background:#fff"></div>
<svg style="left:1585px;top:548.9000000000001px" width="10" height="6" viewBox="0 0 10 6"><path d="M0.5 0.5 L9.5 0.5 L5 5.5Z" fill="#747474"/></svg>
<div class="t " style="left:1178.10px;top:567.45px;font-size:14px;line-height:14px;color:#4b5058;letter-spacing:-0.200px;">Scott Fawcett</div>
<div class="r" style="left:1178.1px;top:581.7px;width:82.4px;height:1px;border-bottom:1px dotted #8c8c8c"></div>
<div class="t " style="left:1267.00px;top:565.70px;font-size:13px;line-height:13px;color:#181818;letter-spacing:0.237px;">has an upcoming task</div>
<svg style="left:1118.5px;top:609.4px" width="8" height="12" viewBox="0 0 8 12"><path d="M1 0.8 L6.5 6 L1 11.2" fill="none" stroke="#5c5c5c" stroke-width="1.3"/></svg>
<div class="r" style="left:1136px;top:607.9px;width:24px;height:24px;background:#48a95e;border-radius:4px"></div>
<svg style="left:1136px;top:607.9px" width="24" height="24" viewBox="0 0 16 16"><path d="M3.2 4.8 L4.2 5.8 L6 3.8" fill="none" stroke="#fff" stroke-width="1.1"/><rect x="7" y="4.3" width="6" height="1.2" fill="#fff"/><rect x="7" y="7.4" width="6" height="1.2" fill="#fff"/><rect x="7" y="10.5" width="6" height="1.2" fill="#fff"/><rect x="3.6" y="7.3" width="1.4" height="1.4" fill="#fff"/><rect x="3.6" y="10.4" width="1.4" height="1.4" fill="#fff"/></svg>
<div class="r" style="left:1147px;top:635.4px;width:2px;height:34px;background:#48a95e"></div>
<div class="r" style="left:1174.2px;top:607.9px;width:16px;height:16px;border:1px solid #747474;border-radius:2px;background:#fff"></div>
<div class="t " style="left:1201.90px;top:610.05px;font-size:14px;line-height:14px;color:#4b5058;letter-spacing:0.209px;">Recurring Task - Header</div>
<svg style="left:1362.5px;top:608.9px" width="15" height="13" viewBox="0 0 15 13"><g fill="none" stroke="#4f6a92" stroke-width="1.6"><path d="M2 6.2 C2 3.5 4 2.3 6.5 2.3 L11.5 2.3"/><path d="M13 6.8 C13 9.5 11 10.7 8.5 10.7 L3.5 10.7"/></g><path d="M10.5 0 L13.5 2.3 L10.5 4.6Z M4.5 8.4 L1.5 10.7 L4.5 13Z" fill="#4f6a92"/></svg>
<div class="t " style="left:1539.50px;top:612.50px;font-size:13px;line-height:13px;color:#ba0517;font-weight:bold;-webkit-text-stroke:0;letter-spacing:-0.434px;">Apr 2</div>
<div class="r" style="left:1580px;top:606.6px;width:20px;height:20px;border:1px solid #747474;border-radius:4px;background:#fff"></div>
<svg style="left:1585px;top:613.6px" width="10" height="6" viewBox="0 0 10 6"><path d="M0.5 0.5 L9.5 0.5 L5 5.5Z" fill="#747474"/></svg>
<div class="t " style="left:1178.10px;top:632.15px;font-size:14px;line-height:14px;color:#4b5058;letter-spacing:-0.200px;">Scott Fawcett</div>
<div class="r" style="left:1178.1px;top:646.4px;width:82.4px;height:1px;border-bottom:1px dotted #8c8c8c"></div>
<div class="t " style="left:1267.00px;top:630.40px;font-size:13px;line-height:13px;color:#181818;letter-spacing:0.237px;">has an upcoming task</div>
<div class="r" style="left:1314.2px;top:670.4px;width:97.3px;height:31px;border:1px solid #747474;border-radius:4px;background:#fff"></div>
<div class="t " style="left:1331.10px;top:680.00px;font-size:13px;line-height:13px;color:#3e3e3e;letter-spacing:0.289px;">View More</div>
<div class="r" style="left:1117px;top:711.1px;width:491.8px;height:32.2px;background:#f3f3f3;border-radius:4px"></div>
<svg style="left:1126.3px;top:723.7px" width="13" height="9" viewBox="0 0 13 9"><path d="M1 1 L6.5 6.8 L12 1" fill="none" stroke="#181818" stroke-width="1.6"/></svg>
<div class="t " style="left:1148.20px;top:721.20px;font-size:13px;line-height:13px;color:#181818;font-weight:bold;-webkit-text-stroke:0;letter-spacing:0.562px;">April • 2024</div>
<div class="t " style="left:1510.80px;top:721.20px;font-size:13px;line-height:13px;color:#181818;font-weight:bold;-webkit-text-stroke:0;letter-spacing:0.324px;">4 Months Ago</div>
<svg style="left:1118.5px;top:756.5px" width="8" height="12" viewBox="0 0 8 12"><path d="M1 0.8 L6.5 6 L1 11.2" fill="none" stroke="#5c5c5c" stroke-width="1.3"/></svg>
<div class="r" style="left:1136px;top:755px;width:24px;height:24px;background:#28a597;border-radius:4px"></div>
<svg style="left:1136px;top:755px" width="24" height="24" viewBox="0 0 16 16"><rect x="3.5" y="3" width="9.5" height="10" rx="1.3" fill="#fff"/><rect x="2.6" y="5" width="1.8" height="1" fill="#fff"/><rect x="2.6" y="10" width="1.8" height="1" fill="#fff"/><path d="M6.3 5.6 C6.8 5.2 7.3 5.4 7.5 6 L7.6 6.7 C7.7 7 7.4 7.2 7.2 7.4 C7.6 8.3 8.2 8.9 9 9.3 C9.2 9 9.5 8.8 9.8 8.9 L10.6 9.1 C11.1 9.3 11.2 9.8 10.9 10.2 C10.3 11 9.3 11 8.3 10.4 C7 9.6 6.1 8.4 5.8 7.2 C5.7 6.5 5.9 5.9 6.3 5.6Z" fill="#28a597"/></svg>
<div class="r" style="left:1147px;top:783px;width:2px;height:34px;background:#28a597"></div>
<div class="t " style="left:1178.10px;top:757.15px;font-size:14px;line-height:14px;color:#4b5058;letter-spacing:0.219px;">Follow-Up on DocuSign</div>
<div class="t " style="left:1541.00px;top:759.70px;font-size:13px;line-height:13px;color:#181818;letter-spacing:-0.170px;">Apr 3</div>
<div class="r" style="left:1580px;top:753.7px;width:20px;height:20px;border:1px solid #747474;border-radius:4px;background:#fff"></div>
<svg style="left:1585px;top:760.7px" width="10" height="6" viewBox="0 0 10 6"><path d="M0.5 0.5 L9.5 0.5 L5 5.5Z" fill="#747474"/></svg>
<div class="t " style="left:1176.50px;top:777.60px;font-size:13px;line-height:13px;color:#181818;letter-spacing:0.232px;">You logged a call with</div>
<div class="t " style="left:1313.20px;top:779.35px;font-size:14px;line-height:14px;color:#4b5058;letter-spacing:-0.353px;">John Jones</div>
<div class="r" style="left:1313.2px;top:794.5px;width:68.4px;height:1px;border-bottom:1px dotted #8c8c8c"></div>
<div class="t " style="left:1388.00px;top:777.60px;font-size:13px;line-height:13px;color:#181818;letter-spacing:0.438px;">about</div>
<div class="t " style="left:1428.10px;top:779.35px;font-size:14px;line-height:14px;color:#4b5058;letter-spacing:-0.172px;">John Jones - AUM - $1M</div>
<div class="r" style="left:1428.1px;top:794.5px;width:150.4px;height:1px;border-bottom:1px dotted #8c8c8c"></div>
<div class="r" style="left:1117px;top:826px;width:491.8px;height:32.2px;background:#f3f3f3;border-radius:4px"></div>
<svg style="left:1126.3px;top:838.6px" width="13" height="9" viewBox="0 0 13 9"><path d="M1 1 L6.5 6.8 L12 1" fill="none" stroke="#181818" stroke-width="1.6"/></svg>
<div class="t " style="left:1148.20px;top:836.10px;font-size:13px;line-height:13px;color:#181818;font-weight:bold;-webkit-text-stroke:0;letter-spacing:0.364px;">March • 2024</div>
<div class="t " style="left:1510.80px;top:836.10px;font-size:13px;line-height:13px;color:#181818;font-weight:bold;-webkit-text-stroke:0;letter-spacing:0.324px;">5 Months Ago</div>
</body></html>
